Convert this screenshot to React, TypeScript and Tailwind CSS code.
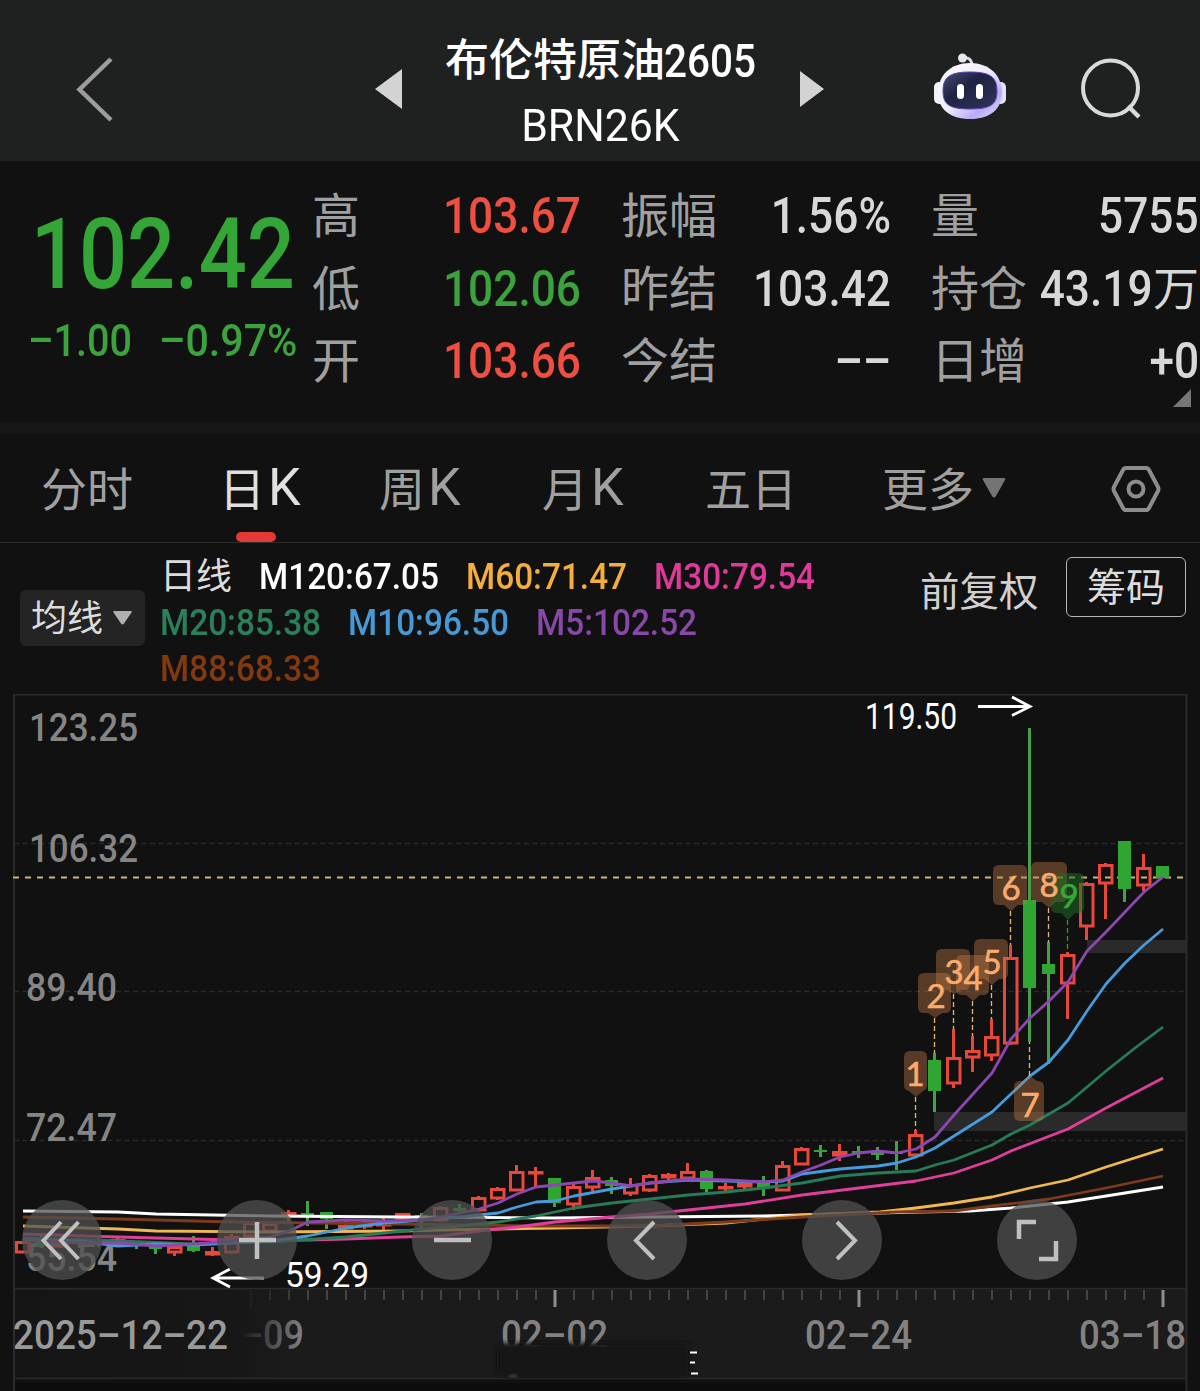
import type { ReactNode } from 'react';

type Tone = 'up' | 'down' | 'flat';

const TONE_CLASS: Record<Tone, string> = {
  up: 'text-[#ee4f40]',
  down: 'text-[#3ba23d]',
  flat: 'text-[#d8d8d8]',
};

type Quote = { label: string; value: string; unit?: string; tone: Tone };

const QUOTE_COLUMNS: { className: string; rows: Quote[] }[] = [
  {
    className: 'ml-[312px] w-[269px]',
    rows: [
      { label: '高', value: '103.67', tone: 'up' },
      { label: '低', value: '102.06', tone: 'down' },
      { label: '开', value: '103.66', tone: 'up' },
    ],
  },
  {
    className: 'ml-[40px] w-[270px]',
    rows: [
      { label: '振幅', value: '1.56%', tone: 'flat' },
      { label: '昨结', value: '103.42', tone: 'flat' },
      { label: '今结', value: '––', tone: 'flat' },
    ],
  },
  {
    className: 'ml-[40px] w-[268px]',
    rows: [
      { label: '量', value: '5755', tone: 'flat' },
      { label: '持仓', value: '43.19', unit: '万', tone: 'flat' },
      { label: '日增', value: '+0', tone: 'flat' },
    ],
  },
];

const TABS = [
  { label: '分时', className: 'ml-[41px] w-[178px]' },
  { label: '日', suffix: 'K', className: 'w-[160px]', active: true },
  { label: '周', suffix: 'K', className: 'w-[163px]' },
  { label: '月', suffix: 'K', className: 'w-[163px]' },
  { label: '五日', className: 'w-[177px]' },
  { label: '更多', className: 'w-[92px]' },
];

const LEGEND_ROWS = [
  [
    { text: 'M120:67.05', className: 'w-[207px] text-white' },
    { text: 'M60:71.47', className: 'w-[188px] text-[#f3ae3d]' },
    { text: 'M30:79.54', className: 'text-[#df3a9a]' },
  ],
  [
    { text: 'M20:85.38', className: 'w-[188px] text-[#2a8059]' },
    { text: 'M10:96.50', className: 'w-[188px] text-[#4799d6]' },
    { text: 'M5:102.52', className: 'text-[#8848a8]' },
  ],
  [{ text: 'M88:68.33', className: 'text-[#83390f]' }],
];

const RED = '#e8473c';
const GREEN = '#2fa532';
const GREEN_WICK = '#45a047';

// [x, body top, body bottom, high, low, rising]
type Candle = [number, number, number, number, number, boolean];

const CANDLES: Candle[] = [
  [23, 1241, 1252, 1241, 1252, true],
  [42, 1238, 1246, 1236, 1248, false],
  [61, 1240, 1246, 1238, 1248, true],
  [80, 1240, 1244, 1238, 1248, false],
  [99, 1240, 1245, 1238, 1247, false],
  [118, 1239, 1243, 1237, 1245, true],
  [137, 1243, 1246, 1241, 1249, false],
  [156, 1245, 1249, 1243, 1254, false],
  [175, 1246, 1252, 1244, 1256, true],
  [194, 1245, 1251, 1236, 1252, false],
  [213, 1251, 1254, 1247, 1256, true],
  [232, 1236, 1252, 1234, 1254, true],
  [251, 1222, 1236, 1221, 1238, true],
  [270, 1223, 1231, 1221, 1233, true],
  [289, 1212, 1215, 1210, 1223, true],
  [308, 1213, 1215, 1201, 1226, false],
  [327, 1212, 1219, 1212, 1229, false],
  [346, 1225, 1228, 1220, 1231, true],
  [365, 1222, 1226, 1220, 1229, true],
  [384, 1220, 1225, 1217, 1230, true],
  [403, 1213, 1219, 1213, 1220, true],
  [422, 1215, 1217, 1213, 1228, false],
  [441, 1207, 1220, 1206, 1222, true],
  [460, 1208, 1211, 1204, 1213, false],
  [479, 1197, 1210, 1196, 1211, true],
  [498, 1188, 1198, 1187, 1200, true],
  [517, 1171, 1190, 1165, 1190, true],
  [536, 1171, 1173, 1167, 1187, true],
  [555, 1178, 1203, 1178, 1207, false],
  [574, 1186, 1204, 1182, 1210, true],
  [593, 1177, 1187, 1170, 1191, true],
  [612, 1180, 1186, 1177, 1194, false],
  [631, 1184, 1193, 1178, 1196, true],
  [650, 1175, 1190, 1174, 1192, true],
  [669, 1174, 1177, 1173, 1180, true],
  [688, 1171, 1178, 1163, 1180, true],
  [707, 1171, 1189, 1170, 1193, false],
  [726, 1186, 1188, 1183, 1193, true],
  [745, 1182, 1186, 1182, 1189, true],
  [764, 1182, 1188, 1176, 1196, false],
  [783, 1165, 1190, 1161, 1190, true],
  [802, 1148, 1164, 1147, 1165, true],
  [821, 1150, 1152, 1145, 1157, false],
  [840, 1151, 1155, 1144, 1161, true],
  [859, 1151, 1153, 1146, 1158, false],
  [878, 1152, 1155, 1147, 1160, false],
  [897, 1152, 1154, 1141, 1170, false],
  [916, 1134, 1155, 1130, 1155, true],
  [935, 1060, 1091, 1053, 1112, false],
  [954, 1057, 1083, 1029, 1088, true],
  [973, 1050, 1057, 1036, 1072, true],
  [992, 1036, 1055, 1019, 1061, true],
  [1011, 957, 1043, 945, 1045, true],
  [1030, 900, 988, 728, 1042, false],
  [1049, 964, 974, 942, 1064, false],
  [1068, 954, 983, 952, 1019, true],
  [1087, 883, 926, 882, 940, true],
  [1106, 864, 883, 863, 919, true],
  [1125, 841, 889, 841, 902, false],
  [1144, 867, 885, 854, 891, true],
  [1163, 866, 878, 866, 878, false],
];

const AVERAGES = [
  { color: '#ffffff', points: '23,1211 118,1212 156,1214 270,1216 400,1217 555,1218 650,1217 764,1216 840,1214 916,1212 970,1211 1011,1208 1068,1202 1106,1196 1163,1187' },
  { color: '#f0b850', points: '23,1226 118,1229 156,1231 270,1232 400,1231 441,1230 555,1228 650,1226 726,1223 764,1219 802,1215 880,1212 916,1208 954,1203 992,1197 1030,1188 1068,1180 1106,1167 1163,1149' },
  { color: '#7d3b1c', points: '23,1217 118,1219 232,1222 400,1224 536,1226 650,1226 726,1222 802,1217 897,1212 954,1211 992,1206 1049,1199 1106,1188 1163,1176' },
  { color: '#df3f9b', points: '23,1234 118,1237 232,1240 308,1240 346,1239 400,1237 441,1236 479,1231 517,1227 555,1222 612,1217 650,1214 688,1210 745,1204 802,1195 859,1188 916,1181 954,1173 992,1160 1011,1151 1068,1129 1106,1108 1163,1078' },
  { color: '#277b57', points: '23,1238 118,1241 194,1244 270,1242 346,1237 422,1229 460,1226 498,1222 536,1216 574,1208 612,1203 650,1199 688,1195 726,1192 764,1188 802,1183 840,1176 878,1173 916,1171 935,1165 954,1160 992,1145 1011,1134 1030,1125 1068,1103 1106,1071 1135,1048 1163,1027' },
  { color: '#459bdc', points: '23,1240 80,1241 118,1246 156,1244 194,1245 232,1243 270,1241 308,1236 346,1228 384,1223 422,1220 460,1217 498,1213 517,1207 536,1202 555,1201 574,1196 612,1189 650,1183 688,1180 726,1181 764,1182 783,1181 802,1174 840,1169 878,1166 897,1163 916,1157 935,1148 954,1136 992,1112 1011,1094 1030,1076 1049,1062 1068,1040 1087,1011 1106,984 1125,963 1144,945 1163,929' },
  { color: '#8a48b0', points: '23,1240 80,1243 118,1243 156,1246 194,1244 232,1241 270,1237 289,1231 308,1222 346,1220 384,1221 422,1220 441,1217 460,1213 479,1209 498,1203 517,1194 536,1187 555,1185 593,1181 612,1183 631,1186 650,1183 688,1179 726,1180 764,1182 783,1180 802,1172 821,1165 840,1157 859,1153 878,1151 897,1153 916,1149 935,1137 954,1115 973,1094 992,1073 1011,1039 1030,1018 1049,1001 1068,982 1087,951 1106,932 1125,912 1144,892 1163,877' },
];

type Marker = {
  n: string;
  left: number;
  right: number;
  top: number;
  bottom: number;
  tip: number;
  x: number;
  wick: number;
  tx: number;
  ty: number;
  green?: boolean;
};

const MARKERS: Marker[] = [
  { n: '1', left: 904, right: 927, top: 1051, bottom: 1091, tip: 1097, x: 916, wick: 1130, tx: 915, ty: 1086 },
  { n: '2', left: 918, right: 951, top: 973, bottom: 1013, tip: 1018, x: 935, wick: 1053, tx: 936, ty: 1008 },
  { n: '3', left: 936, right: 970, top: 949, bottom: 990, tip: 994, x: 954, wick: 1029, tx: 954, ty: 984 },
  { n: '4', left: 956, right: 989, top: 955, bottom: 995, tip: 1001, x: 973, wick: 1036, tx: 973, ty: 990 },
  { n: '5', left: 974, right: 1008, top: 939, bottom: 979, tip: 985, x: 992, wick: 1019, tx: 992, ty: 974 },
  { n: '6', left: 993, right: 1027, top: 865, bottom: 905, tip: 911, x: 1011, wick: 945, tx: 1011, ty: 900 },
  { n: '7', left: 1014, right: 1044, top: 1081, bottom: 1121, tip: 1076, x: 1030, wick: 1042, tx: 1030, ty: 1117 },
  { n: '8', left: 1031, right: 1067, top: 862, bottom: 902, tip: 908, x: 1049, wick: 942, tx: 1049, ty: 897 },
  { n: '9', left: 1051, right: 1084, top: 873, bottom: 913, tip: 920, x: 1068, wick: 953, tx: 1069, ty: 908, green: true },
];

const PRICE_LABELS = [
  { text: '123.25', x: 29, y: 741, width: 109 },
  { text: '106.32', x: 29, y: 862, width: 109 },
  { text: '89.40', x: 26, y: 1001, width: 91 },
  { text: '72.47', x: 26, y: 1141, width: 91 },
  { text: '55.54', x: 26, y: 1271, width: 91 },
];

const TICKS = Array.from({ length: 49 }, (_, i) => 251 + i * 19);

const CONTROLS: { name: string; icon: ReactNode }[] = [
  { name: 'first', icon: <path d="M39 22 21.500 40.500 39 59M56.500 22 39 40.500 56.500 59" /> },
  { name: 'zoom in', icon: <path d="M40 22v37M22 40h37" strokeWidth={4.500} /> },
  { name: 'zoom out', icon: <path d="M22 40h37" strokeWidth={4.500} /> },
  { name: 'previous', icon: <path d="M47 22 29 40.500 47 59" /> },
  { name: 'next', icon: <path d="M35 22 53 40.500 35 59" /> },
  { name: 'full screen', icon: <path d="M39 22H22v17M59 41v18H42" strokeWidth={4.500} /> },
];

function Robot() {
  return (
    <svg viewBox="0 0 74 68" className="h-[68px] w-[74px]">
      <defs>
        <linearGradient id="shell" x1="0" y1="0" x2="1" y2="1">
          <stop offset="0" stopColor="#ffffff" />
          <stop offset=".5" stopColor="#eeeaff" />
          <stop offset=".75" stopColor="#b8abf2" />
          <stop offset="1" stopColor="#e6e2fb" />
        </linearGradient>
        <linearGradient id="visor" x1="0" y1="0" x2="1" y2="1">
          <stop offset="0" stopColor="#474d74" />
          <stop offset=".4" stopColor="#1f2342" />
          <stop offset="1" stopColor="#30345a" />
        </linearGradient>
      </defs>
      <path d="M30 5c6-1 9 2 9 8" fill="none" stroke="#d9d9e6" strokeWidth="3" />
      <circle cx="29.500" cy="5" r="4.500" fill="#e6e6ee" />
      <rect x="1" y="29" width="12" height="22" rx="5" fill="#f0f1fb" />
      <rect x="61" y="29" width="12" height="22" rx="5" fill="#e4e0fb" />
      <path d="M37 10c19 0 32 12 32 30 0 16-12 26-32 26S5 56 5 40c0-18 13-30 32-30z" fill="url(#shell)" />
      <path d="M37 19c20 0 27 5 27 19 0 14-7 18-27 18S10 52 10 38c0-14 7-19 27-19z" fill="url(#visor)" stroke="#5a48b8" strokeWidth="1" />
      <rect x="24" y="31" width="7" height="15" rx="3.500" fill="#ffffff" />
      <rect x="43" y="31" width="7" height="15" rx="3.500" fill="#ffffff" />
    </svg>
  );
}

function Header() {
  return (
    <header className="flex h-[161px] items-start bg-[#1f2120] text-white">
      <svg viewBox="0 0 40 68" className="mt-[55px] ml-[75px] h-[68px] w-[40px]">
        <path d="M36 4 4.500 34.500 36 65" fill="none" stroke="#9c9c9c" strokeWidth="4.500" />
      </svg>
      <svg viewBox="0 0 27 40" className="mt-[69px] ml-[260px] h-[40px] w-[27px]">
        <path d="M27 0v40L0 20z" fill="#d3d3d3" />
      </svg>
      <div className="ml-[43px] w-[310px] pt-[28px]">
        <div className="flex h-[65px] items-center font-medium whitespace-nowrap">
          <span className="w-[219px] text-[44px] leading-none">布伦特原油</span>
          <span className="origin-left scale-x-[0.880] text-[46px] leading-none">2605</span>
        </div>
        <div className="flex h-[65px] items-center justify-center text-[45px] leading-none">
          <span className="scale-x-[0.950]">BRN26K</span>
        </div>
      </div>
      <svg viewBox="0 0 24 36" className="mt-[71px] ml-[45px] h-[36px] w-[24px]">
        <path d="M0 0v36l24-18z" fill="#d3d3d3" />
      </svg>
      <div className="mt-[53px] ml-[109px]">
        <Robot />
      </div>
      <svg viewBox="0 0 62 62" className="mt-[58px] ml-[73px] h-[62px] w-[62px]">
        <circle cx="30.500" cy="30" r="27.500" fill="none" stroke="#d9d9d9" strokeWidth="4" />
        <path d="m48 48 11 11" fill="none" stroke="#d9d9d9" strokeWidth="4.500" />
      </svg>
    </header>
  );
}

function QuotePanel() {
  return (
    <section className="relative h-[261px] overflow-hidden">
      <div className="absolute top-0 left-0 w-[312px]">
        <div className="mt-[44px] flex h-[98px] w-[295px] items-center justify-end text-[99px] leading-none font-medium text-[#33a637]">
          <span className="origin-right scale-x-[0.855]">102.42</span>
        </div>
        <div className="flex h-[74px] items-center text-[45px] leading-none whitespace-nowrap text-[#3ba23d]">
          <span className="ml-[28px] w-[131px] shrink-0">
            <span className="inline-block origin-left scale-x-[0.880] font-medium">–1.00</span>
          </span>
          <span className="w-[140px] shrink-0">
            <span className="inline-block origin-left scale-x-[0.915] font-medium">–0.97%</span>
          </span>
        </div>
      </div>
      <div className="flex pt-[19px]">
        {QUOTE_COLUMNS.map((column) => (
          <div key={column.className} className={`shrink-0 ${column.className}`}>
            {column.rows.map((row) => (
              <div key={row.label} className="flex h-[72.500px] items-center justify-between whitespace-nowrap">
                <span className="pt-[2px] text-[48px] leading-none text-[#a0a0a0]">{row.label}</span>
                <span className={`flex items-center justify-end ${TONE_CLASS[row.tone]}`}>
                  <span className="-ml-10 origin-right scale-x-[0.885] text-[50px] leading-none font-medium">
                    {row.value}
                  </span>
                  {row.unit && <span className="text-[46px] leading-none">{row.unit}</span>}
                </span>
              </div>
            ))}
          </div>
        ))}
      </div>
      <svg viewBox="0 0 18 18" className="absolute right-[9px] bottom-[15px] h-[18px] w-[18px]">
        <path d="M18 0v18H0z" fill="#777777" />
      </svg>
    </section>
  );
}

function PeriodTabs() {
  return (
    <nav className="flex h-[109px] items-start border-b border-[#2e2e2e] text-[46px] leading-none text-[#a0a0a0]">
      {TABS.map((tab) => (
        <div key={tab.label} className={`relative flex h-[108px] items-center ${tab.className}`}>
          <span className={tab.active ? 'pt-[3px] text-[#e0e0e0]' : 'pt-[3px]'}>{tab.label}</span>
          {tab.suffix && (
            <span className={`ml-[3px] text-[52px] ${tab.active ? 'text-[#e0e0e0]' : ''}`}>{tab.suffix}</span>
          )}
          {tab.active && <span className="absolute bottom-0 left-[17px] h-[10px] w-[40px] rounded-full bg-[#e23a37]" />}
        </div>
      ))}
      <svg viewBox="0 0 24 20" className="mt-[44px] ml-[8px] h-[20px] w-[24px]">
        <path d="M2 0h20q2 0 1 2l-9 16q-2 3-4 0L1 2Q0 0 2 0z" fill="#747474" />
      </svg>
      <svg viewBox="0 0 50 48" className="mt-[31px] ml-[105px] h-[48px] w-[50px]" fill="none" stroke="#8c8c8c" strokeWidth="4">
        <path d="M15 3h20q2 0 3 2l9 17q1 2 0 4l-9 17q-1 2-3 2H15q-2 0-3-2L3 26q-1-2 0-4l9-17q1-2 3-2z" />
        <circle cx="25" cy="24" r="7.500" />
      </svg>
    </nav>
  );
}

function Legend() {
  return (
    <section className="flex h-[151px] items-start">
      <button
        type="button"
        className="mt-[47px] ml-[20px] flex h-[56px] w-[125px] items-center rounded-md bg-[#242424] pt-[2px] pl-[11px] text-[36px] leading-none text-[#dcdcdc]"
      >
        均线
        <svg viewBox="0 0 19 14" className="mb-[2px] ml-[10px] h-[14px] w-[19px]">
          <path d="M1.500 0h16q2 0 1 1.500l-7.500 11q-1.500 2-3 0L.5 1.500Q-.5 0 1.500 0z" fill="#b0b0b0" />
        </svg>
      </button>
      <div className="ml-[15px] w-[700px] pt-[11px] text-[37.500px] leading-none">
        {LEGEND_ROWS.map((row, index) => (
          <div key={index} className="flex h-[46px] items-center whitespace-nowrap">
            {index === 0 && <span className="w-[99px] text-[36px] text-[#dcdcdc]">日线</span>}
            {row.map((item) => (
              <span key={item.text} className={item.className}>
                <span className="inline-block origin-left scale-x-[0.890] font-medium">{item.text}</span>
              </span>
            ))}
          </div>
        ))}
      </div>
      <span className="mt-[28px] ml-[60px] w-[120px] text-[39.500px] leading-[44px] whitespace-nowrap text-[#d0d0d0]">前复权</span>
      <button
        type="button"
        className="mt-[14px] ml-[26px] flex h-[60px] w-[120px] items-center justify-center rounded-md border border-[#b5b5b5] pt-[2px] text-[39px] leading-none text-[#dcdcdc]"
      >
        筹码
      </button>
    </section>
  );
}

function CandleShape({ candle }: { candle: Candle }) {
  const [x, top, bottom, high, low, rising] = candle;
  if (!rising) {
    return (
      <g>
        <path d={`M${x - 0.5} ${high}V${low}`} stroke={GREEN_WICK} strokeWidth="3" />
        <rect x={x - 7} y={top} width="13" height={bottom - top} fill={GREEN} />
      </g>
    );
  }
  const thin = bottom - top < 6;
  return (
    <g stroke={RED} strokeWidth="3" fill="none">
      <path d={`M${x - 0.5} ${high}V${top}M${x - 0.5} ${bottom}V${low}`} />
      <rect x={x - 6.5} y={top + 1.5} width="12.500" height={Math.max(bottom - top - 1.5, 0.5)} fill={thin ? RED : 'none'} />
    </g>
  );
}

function MarkerShape({ marker }: { marker: Marker }) {
  const { left, right, top, bottom, tip, x, wick, green } = marker;
  const upper = tip < top ? `H${x - 7}L${x} ${tip}L${x + 7} ${top}` : '';
  const lower = tip > bottom ? `H${x + 7}L${x} ${tip}L${x - 7} ${bottom}` : '';
  return (
    <g>
      <path d={`M${x - 0.5} ${tip}V${wick}`} stroke={green ? '#3f8f41' : '#e3b678'} strokeWidth="1.300" strokeDasharray="5 3" />
      <path
        d={`M${left + 6} ${top}${upper}H${right - 6}Q${right} ${top} ${right} ${top + 6}V${bottom - 6}Q${right} ${bottom} ${right - 6} ${bottom}${lower}H${left + 6}Q${left} ${bottom} ${left} ${bottom - 6}V${top + 6}Q${left} ${top} ${left + 6} ${top}z`}
        fill={green ? '#1f6a25' : '#c07a48'}
        fillOpacity={green ? 0.55 : 0.4}
      />
    </g>
  );
}

function Chart() {
  return (
    <section className="relative h-[697px]">
      <svg viewBox="0 694 1200 697" className="h-[697px] w-[1200px]">
        <defs>
          <linearGradient id="dateFade" x1="0" x2="1">
            <stop offset="0" stopColor="#151515" />
            <stop offset=".78" stopColor="#171717" />
            <stop offset="1" stopColor="#1b1b1b" stopOpacity="0" />
          </linearGradient>
          <filter id="smudge" x="-10%" y="-50%" width="120%" height="200%">
            <feGaussianBlur stdDeviation="2" />
          </filter>
        </defs>

        <rect x="14" y="1288" width="1173" height="90" fill="#1b1b1b" />
        <rect x="14" y="1383" width="1173" height="8" fill="#0c0c0c" />
        <path d="M14 694V1391M1186.500 694V1391M13 694.500H1187" stroke="#2b2b2b" strokeWidth="2" fill="none" />
        <path d="M14 1288.500H1187M14 1378.500H1187" stroke="#2a2a2a" strokeWidth="1.500" />
        <path d="M14 843.500H1186M14 991.500H1186M14 1140.500H1186" stroke="#2a2a2a" strokeWidth="1.500" strokeDasharray="5 3.500" />

        <rect x="1087" y="940" width="100" height="13" fill="#2a2a2a" />
        <rect x="934" y="1112" width="253" height="19" fill="#2a2a2a" />

        <g fontSize="39" fontWeight="500" fill="#858585">
          {PRICE_LABELS.map((label) => (
            <text key={label.text} x={label.x} y={label.y} textLength={label.width} lengthAdjust="spacingAndGlyphs">
              {label.text}
            </text>
          ))}
        </g>

        <path d="M13 877.500H1186" stroke="#c9b57e" strokeWidth="1.800" strokeDasharray="6 6" />

        {CANDLES.map((candle) => (
          <CandleShape key={candle[0]} candle={candle} />
        ))}
        {AVERAGES.map((line) => (
          <polyline key={line.color} points={line.points} fill="none" stroke={line.color} strokeWidth="2.800" strokeLinejoin="round" />
        ))}
        {MARKERS.map((marker) => (
          <MarkerShape key={marker.n} marker={marker} />
        ))}
        <g fontFamily="Lato" fontSize="33" textAnchor="middle" strokeWidth="0.600">
          {MARKERS.map(({ n, tx, ty, green }) => (
            <text key={n} x={tx} y={ty} fill={green ? '#35a838' : '#fbab6c'} stroke={green ? '#35a838' : '#fbab6c'}>
              {n}
            </text>
          ))}
        </g>

        <g fill="#ffffff">
          <text x="865" y="729" fontSize="36" textLength="92" lengthAdjust="spacingAndGlyphs">119.50</text>
          <text x="285" y="1287" fontSize="35.500" textLength="84" lengthAdjust="spacingAndGlyphs">59.29</text>
        </g>
        <path d="M978 706.500H1029M1012 697l18 9.500-18 9" stroke="#ffffff" strokeWidth="2.800" fill="none" />
        <path d="M264 1278H214M230 1269l-17 9 17 9" stroke="#ffffff" strokeWidth="2.800" fill="none" />

        {TICKS.map((x, i) => (
          <path
            key={x}
            d={`M${x} 1290V${i % 16 === 0 ? 1307 : 1300}`}
            stroke={i === 0 ? '#4a4a4a' : i % 16 === 0 ? '#8f8f8f' : '#444444'}
            strokeWidth={i % 16 === 0 ? 3 : 2}
          />
        ))}

        <g fontSize="40" fontWeight="500" fill="#828282">
          <text x="240" y="1349" textLength="64" lengthAdjust="spacingAndGlyphs">–09</text>
          <text x="501" y="1349" textLength="107" lengthAdjust="spacingAndGlyphs">02–02</text>
          <text x="805" y="1349" textLength="107" lengthAdjust="spacingAndGlyphs">02–24</text>
          <text x="1079" y="1349" textLength="107" lengthAdjust="spacingAndGlyphs">03–18</text>
          <rect x="15" y="1290" width="289" height="87" fill="url(#dateFade)" />
          <text x="13" y="1349" fill="#999999" textLength="215" lengthAdjust="spacingAndGlyphs">2025–12–22</text>
        </g>

        <rect x="498" y="1343" width="192" height="33" rx="6" fill="#181818" filter="url(#smudge)" />
        <path d="M690 1352.500h7M690 1362.500h5M691 1373.500h7" stroke="#ffffff" strokeWidth="2" />
        <path d="M509 1377q5-4 8 0" stroke="#666666" strokeWidth="2" fill="none" filter="url(#smudge)" />
      </svg>

      <div className="absolute top-[506px] left-[22px] flex gap-[115px]">
        {CONTROLS.map((control) => (
          <button
            key={control.name}
            type="button"
            aria-label={control.name}
            className="h-[80px] w-[80px] rounded-full bg-[#505050]/75"
          >
            <svg viewBox="0 0 80 80" className="h-[80px] w-[80px]" fill="none" stroke="#c0c0c0" strokeWidth="4">
              {control.icon}
            </svg>
          </button>
        ))}
      </div>
    </section>
  );
}

export default function App() {
  return (
    <main className="h-[1391px] w-[1200px] overflow-hidden bg-[#111111] font-[Roboto,'Noto_Sans_CJK_SC',sans-serif]">
      <Header />
      <QuotePanel />
      <div className="h-[12px] bg-[#171717]" />
      <PeriodTabs />
      <Legend />
      <Chart />
    </main>
  );
}
